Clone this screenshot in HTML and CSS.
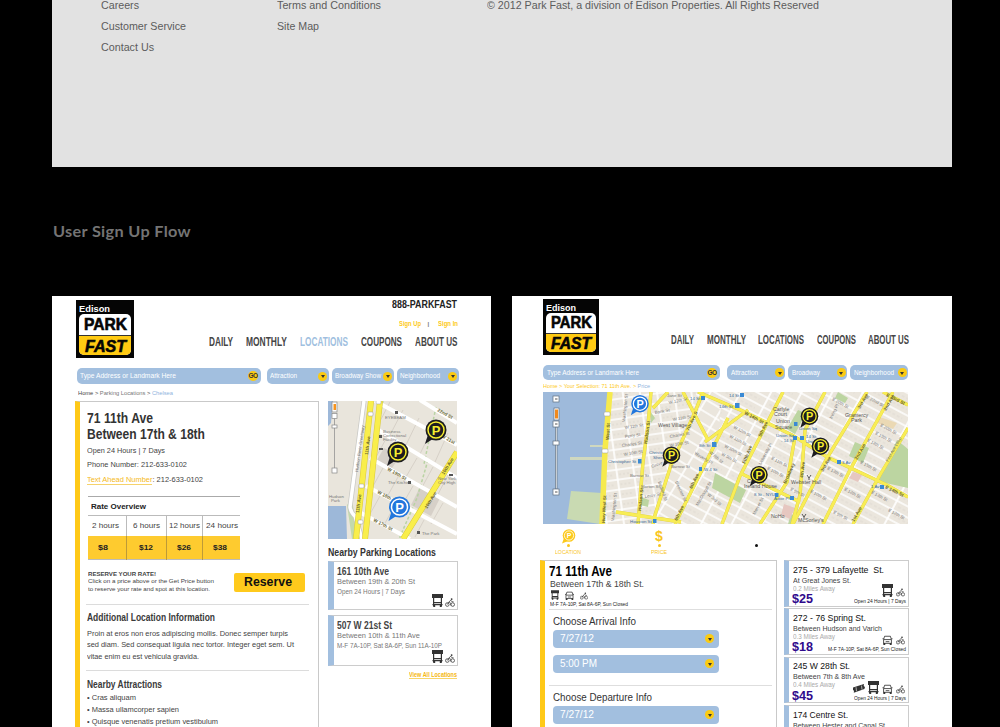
FILE: index.html
```html
<!DOCTYPE html>
<html lang="en">
<head>
<meta charset="utf-8">
<title>Park Fast – User Sign Up Flow</title>
<link rel="stylesheet" href="styles.css">
</head>
<body>
<svg class="defs" width="0" height="0">
  <defs>
    <symbol id="bus" viewBox="0 0 11 13"><path d="M0 0h11v4H0zM1 4h1.2v8H1zM8.8 4H10v8H8.8zM2 8h7v1.2H2zM0.5 10h10v1.2H.5zM1.2 11h2v2h-2zM7.8 11h2v2h-2z"/></symbol>
    <symbol id="car" viewBox="0 0 12 12"><path d="M2.500 1.500h7l1.200 4v4.500H1.300V5.500z M1.500 5.500h9 M3.800 8h4.400 M0 4.500h1.500 M10.500 4.500H12" fill="none" stroke="currentColor" stroke-width="1"/><path d="M1 9.500h2.300V12H1zM8.700 9.500H11V12H8.700z"/></symbol>
    <symbol id="bike" viewBox="0 0 12 11"><g fill="none" stroke="currentColor" stroke-width=".9"><circle cx="2.700" cy="8" r="2.200"/><circle cx="9.300" cy="8" r="2.200"/><path d="M2.700 8l2-3.200 2.200 1.600V9M4.700 4.800L7 2.700l1.300 1.900h2"/></g><circle cx="8" cy="1.300" r="1.100"/></symbol>
    <symbol id="ticket" viewBox="0 0 12 9"><path d="M0 3.500L11 0l-.3 2 1.300 1-.6 2L.8 8.700l.2-2L0 6z"/><path d="M3 3.200l.5 4M8.500 1.600l.5 4" stroke="#fff" stroke-width=".6"/></symbol>
    <symbol id="pin" viewBox="-12 -12 24 26"><path d="M-11 14L-7.500 3 0 7z"/><circle r="10.500"/><circle class="ring" r="8" fill="none" stroke-width="1.500"/><text class="ring-p" y="4.600" text-anchor="middle">P</text></symbol>
    <pattern id="east" width="27" height="10" patternUnits="userSpaceOnUse" patternTransform="rotate(28)"><path d="M0 1h27M1 0v10" stroke="#fff" stroke-width="1.700"/><path d="M5 6h16" stroke="#d8d3cb" stroke-width=".6" stroke-dasharray="3 2"/></pattern>
    <pattern id="west" width="17" height="10" patternUnits="userSpaceOnUse" patternTransform="rotate(-8)"><path d="M0 1h17M1 0v10" stroke="#fff" stroke-width="1.600"/><path d="M3 6h10" stroke="#d3cec6" stroke-width=".6" stroke-dasharray="2 2"/></pattern>
    <pattern id="mid" width="18" height="11" patternUnits="userSpaceOnUse" patternTransform="rotate(31)"><path d="M0 1h18M1 0v11" stroke="#fff" stroke-width="1.600"/></pattern>
  </defs>
</svg>

<footer class="site-footer">
  <div class="links"><p><span data-w="38">Careers</span></p><p><span data-w="85">Customer Service</span></p><p><span data-w="53">Contact Us</span></p></div>
  <div class="links terms"><p><span data-w="104">Terms and Conditions</span></p><p><span data-w="42">Site Map</span></p></div>
  <div class="links"><p><span data-w="332">© 2012 Park Fast, a division of Edison Properties. All Rights Reserved</span></p></div>
</footer>
<h2 class="flow-title"><span data-w="138">User Sign Up Flow</span></h2>

<main class="screens">
<section class="screen location">
  <header class="head">
    <div class="logo"><b><span data-w="31">Edison</span></b><div class="plate"><i class="park"><span data-w="43">PARK</span></i><i class="fast"><span data-w="41">FAST</span></i></div></div>
    <div class="head-right">
      <p class="phone"><span data-w="65">888-PARKFAST</span></p>
      <p class="sign"><span data-w="22">Sign Up</span><em>|</em><span data-w="20">Sign In</span></p>
      <nav><span data-w="24">DAILY</span><span data-w="41">MONTHLY</span><span class="on" data-w="48">LOCATIONS</span><span data-w="41">COUPONS</span><span data-w="42.5">ABOUT US</span></nav>
    </div>
  </header>
  <div class="search">
    <div class="field"><span data-w="96">Type Address or Landmark Here</span><b class="go">GO</b></div>
    <div class="drop"><span data-w="27">Attraction</span><b class="arrow"></b></div>
    <div class="drop"><span data-w="46">Broadway Show</span><b class="arrow"></b></div>
    <div class="drop"><span data-w="40">Neighborhood</span><b class="arrow"></b></div>
  </div>
  <p class="crumbs"><span data-w="95">Home &gt; <u>Parking Locations</u> &gt; <a>Chelsea</a></span></p>
  <div class="cols">
    <article class="detail">
      <h1><span data-w="66">71 11th Ave</span></h1>
      <h1><span data-w="118">Between 17th &amp; 18th</span></h1>
      <p class="fact first"><span data-w="78">Open 24 Hours | 7 Days</span></p>
      <p class="fact"><span data-w="100">Phone Number: 212-633-0102</span></p>
      <p class="fact"><span data-w="116"><a>Text Ahead Number</a>: 212-633-0102</span></p>
      <div class="rates">
        <div class="rate-title"><span data-w="55">Rate Overview</span></div>
        <div class="rate-row"><div><span data-w="27">2 hours</span></div><div><span data-w="27">6 hours</span></div><div><span data-w="31">12 hours</span></div><div><span data-w="32">24 hours</span></div></div>
        <div class="rate-row prices"><div><span data-w="10">$8</span></div><div><span data-w="14">$12</span></div><div><span data-w="14">$26</span></div><div><span data-w="14">$38</span></div></div>
      </div>
      <div class="reserve">
        <div><p class="caps"><span data-w="68">RESERVE YOUR RATE!</span></p><p><span data-w="126">Click on a price above or the Get Price button</span></p><p><span data-w="122">to reserve your rate and spot at this location.</span></p></div>
        <button><span data-w="48">Reserve</span></button>
      </div>
      <h3><span data-w="128">Additional Location Information</span></h3>
      <div class="copy"><p><span data-w="201">Proin at eros non eros adipiscing mollis. Donec semper turpis</span></p><p><span data-w="207">sed diam. Sed consequat ligula nec tortor. Integer eget sem. Ut</span></p><p><span data-w="112">vitae enim eu est vehicula gravida.</span></p></div>
      <h3 class="ruled"><span data-w="75">Nearby Attractions</span></h3>
      <div class="bullets"><p><span data-w="49">• Cras aliquam</span></p><p><span data-w="92">• Massa ullamcorper sapien</span></p><p><span data-w="131">• Quisque venenatis pretium vestibulum</span></p></div>
    </article>
    <aside class="nearby">
      <svg class="map" width="129" height="138" viewBox="328 401 129 138">
        <path fill="#e9e5dc" d="M328 401h129v138H328z"/>
        <path fill="#9db8d9" d="M328 401h5l-2 22-3 3zM328 506h18l1 33h-19z"/>
        <path fill="#c3d9ad" d="M347 505l5-6 6 40h-6z"/>
        <path fill="#d6d0c8" d="M384 448l16 8-8 12-15-8zM420 487l20 11-9 18-20-11z"/>
        <g stroke="#d7d1c8" fill="none" stroke-width="1"><path d="M390 402l-13 25M403 410l-13 25M419 418l-13 27M434 425l-14 29M448 433l-13 29M387 437l-12 22M402 448l-13 24M417 458l-14 24M433 467l-13 24M448 475l-13 25M383 468l-11 20M398 477l-11 20M413 486l-12 21M443 503l-12 21M380 496l-10 18M395 505l-11 20M424 520l-9 17"/></g>
        <path d="M383 401l-10 52M436 407l-12 57M428 460l-11 38-18 41" stroke="#b9d3a3" stroke-width="1.500" fill="none" stroke-dasharray="3 2"/>
        <g fill="none" stroke="#fff" stroke-width="4"><path d="M375 401l82 44M375 428l82 50M370 458l87 49M366 486l91 48M361 513l49 26M420 400l37 23"/></g>
        <path d="M364 401l-14 106q1 6 5 9l7 23" fill="none" stroke="#c9c9c5" stroke-width="5"/><path d="M364 401l-14 106q1 6 5 9l7 23" fill="none" stroke="#fff" stroke-width="3.500"/>
        <g fill="none" stroke="#d9c938" stroke-width="6"><path d="M371 401l-15 138M380 401l-15 138M457 452l-54 87"/></g>
        <g fill="none" stroke="#f9ee4b" stroke-width="5"><path d="M371 401l-15 138M380 401l-15 138M457 452l-54 87"/></g>
        <g class="ml"><text transform="translate(368 455) rotate(-83)">11th Ave</text><text transform="translate(359 513) rotate(-83)">11th Ave</text><text transform="translate(358 472) rotate(-82)" class="thin">Hudson River Greenway</text><text transform="translate(427 509) rotate(-58)">10th Ave</text><text transform="translate(444 475) rotate(-58)">10th Ave</text><text transform="translate(387 470) rotate(29)">W 19th St</text><text transform="translate(377 493) rotate(28)">W 18th St</text><text transform="translate(373 521) rotate(28)">W 17th St</text><text transform="translate(437 411) rotate(29)">22nd St</text><text transform="translate(441 437) rotate(29)">W 21st</text>
        <text class="thin" x="385" y="419">EYEBEAM</text><text class="thin" x="383" y="433">Business</text><text class="thin" x="383" y="437">Correctional</text><text class="thin" x="383" y="441">Facility</text><text class="thin" x="388" y="484">The Kitchen</text><text class="thin" x="422" y="535">The Park</text><text class="thin" x="438" y="480">New York</text><text class="thin" x="438" y="484">City High</text><text class="thin" x="329" y="498">Hudson</text><text class="thin" x="331" y="502">Park</text></g>
        <g fill="#fff" stroke="#999" stroke-width=".5"><rect x="376" y="400" width="5" height="4" rx="1"/><rect x="368" y="412" width="5" height="4" rx="1"/><rect x="359" y="484" width="5" height="4" rx="1"/><rect x="358" y="520" width="5" height="4" rx="1"/></g>
        <g fill="#555"><path d="M395 411h3v3h-3zM379 435h3v3h-3zM379 448h4v2h-4zM408 481h3v3h-3zM449 474h4v2h-4zM417 531h3v3h-3z"/></g>
        <g fill="#fff" stroke="#888" stroke-width=".7"><rect x="332" y="402" width="5" height="10"/><path d="M334.500 418v52"/><rect x="332" y="413.500" width="5" height="5"/><rect x="332" y="425" width="5" height="3"/><rect x="332" y="468" width="5" height="5"/></g><path d="M333.500 404h2.500v6h-2.500z" fill="#f7941d"/>
        <use href="#pin" class="pin" x="424" y="418" width="24" height="26"/><use href="#pin" class="pin" x="386" y="440" width="24" height="26"/><use href="#pin" class="pin blue" x="387.500" y="495" width="24" height="26"/>
      </svg>
      <h3><span data-w="108">Nearby Parking Locations</span></h3>
      <div class="spot"><h4><span data-w="52">161 10th Ave</span></h4><p><span data-w="78">Between 19th &amp; 20th St</span></p><p class="hrs"><span data-w="68">Open 24 Hours | 7 Days</span></p><div class="icons"><svg width="11" height="13"><use href="#bus"/></svg><svg width="10" height="9"><use href="#bike"/></svg></div></div>
      <div class="spot tall"><h4><span data-w="55">507 W 21st St</span></h4><p><span data-w="83">Between 10th &amp; 11th Ave</span></p><p class="hrs"><span data-w="105">M-F 7A-10P, Sat 8A-6P, Sun 11A-10P</span></p><div class="icons"><svg width="11" height="13"><use href="#bus"/></svg><svg width="10" height="9"><use href="#bike"/></svg></div></div>
      <p class="all"><a><span data-w="48">View All Locations</span></a></p>
    </aside>
  </div>
</section>

<section class="screen price">
  <header class="head">
    <div class="logo"><b><span data-w="30">Edison</span></b><div class="plate"><i class="park"><span data-w="41">PARK</span></i><i class="fast"><span data-w="40">FAST</span></i></div></div>
    <div class="head-right"><nav><span data-w="23">DAILY</span><span data-w="39">MONTHLY</span><span data-w="46">LOCATIONS</span><span data-w="39">COUPONS</span><span data-w="41">ABOUT US</span></nav></div>
  </header>
  <div class="search">
    <div class="field"><span data-w="92">Type Address or Landmark Here</span><b class="go">GO</b></div>
    <div class="drop"><span data-w="27">Attraction</span><b class="arrow"></b></div>
    <div class="drop"><span data-w="28">Broadway</span><b class="arrow"></b></div>
    <div class="drop"><span data-w="40">Neighborhood</span><b class="arrow"></b></div>
  </div>
  <p class="crumbs"><span data-w="107">Home &gt; Your Selection: 71 11th Ave. &gt; <a>Price</a></span></p>
  <svg class="map wide" width="365" height="132" viewBox="543 392 365 132">
    <path fill="#ebe6dd" d="M543 392h365v132H543z"/>
    <path fill="url(#west)" d="M604 392h93l-25 68-20 64h-52z"/>
    <path fill="url(#mid)" d="M697 392h25l-5 60-40 72h-25l20-64z"/>
    <path fill="url(#east)" d="M722 392h186v132H677l40-72z"/>
    <path fill="#9ebadb" d="M543 392h65l-2 50-5 82h-58z"/>
    <path fill="#c9dab2" d="M571 491l31 2-2 31-33-5z"/><path fill="#cfd8bf" d="M590 445h16v2h-16zM570 457h35v3h-35z"/>
    <path fill="#bcd5a1" d="M798 410l8 3-11 21-8-5zM855 442l14 6-6 15-14-7zM897 440l11 9v39l-31-7zM715 473l31 17-6 13-28-15zM838 392l10 6-3 5-10-5zM641 497l8 3-1 7-8-2zM650 411l5 7-4 5zM791 514l7 3-4 7h-6z"/>
    <path fill="#e6c7c0" d="M853 472l9 3-4 7-9-4zM784 504l11 4-5 11-9-4z"/><path fill="#ebd9b4" d="M880 417l17 6-4 6-16-6z"/>
    <g fill="none" stroke="#dccb45" stroke-width="3.400"><path id="av" d="M651 392l-3 33-5 37-5 62M653 408l15-16M703 392l-8 20-24 53-16 50-2 9M683 392l25 48M728 418l-53 106M698 392l47 20 47 23 35 22 60 28 21 12M783 392l-43 84-18 48M795 437l-8 45-27 42M825 392l-20 38-5 65-8 29M867 392l-40 66-34 66M893 392l-43 78-27 54M908 428l-28 47-27 49M883 392l25 13M740 473l60 29M616 512l65 10M748 410l-43 32"/></g>
    <use href="#av" fill="none" stroke="#f8ed55" stroke-width="2.800"/>
    <path d="M610 392l-5 58-3 74" fill="none" stroke="#f6ea4d" stroke-width="5.500"/>
    <g class="ml"><text transform="translate(609 440) rotate(-86)">West St</text><text transform="translate(605 523) rotate(-87)">Hwy  West St</text><text transform="translate(647 444) rotate(-82)">Hudson St</text><text transform="translate(641 511) rotate(-84)">Hudson St</text><text transform="translate(689 431) rotate(-65)">7th Ave S</text><text transform="translate(692 489) rotate(-64)">6th Ave</text><text transform="translate(677 521) rotate(-64)">6th Ave</text><text transform="translate(744 414) rotate(28)">W 14th St</text><text transform="translate(761 437) rotate(-64)">5th Ave</text><text transform="translate(745 464) rotate(-68)">Fifth Ave</text><text transform="translate(786 484) rotate(-66)">Broadway</text><text transform="translate(803 478) rotate(-83)">4th Ave</text><text transform="translate(823 472) rotate(-60)">3rd Ave</text><text transform="translate(857 460) rotate(-60)">2nd Ave</text><text transform="translate(860 409) rotate(-60)">3rd Ave</text><text transform="translate(886 411) rotate(-60)">2nd Ave</text><text transform="translate(854 522) rotate(-60)">1st Ave</text><text transform="translate(886 396) rotate(27)">E 23rd St</text><text transform="translate(885 488) rotate(27)">E 14th St</text>
    <g class="thin"><text transform="translate(733 428) rotate(28)">W 12th St</text><text transform="translate(729 437) rotate(28)">W 11th St</text><text transform="translate(724 447) rotate(28)">W 10th St</text><text transform="translate(721 455) rotate(28)">W 9th St</text><text transform="translate(771 459) rotate(28)">E 11th St</text><text transform="translate(767 469) rotate(28)">E 10th St</text><text transform="translate(790 490) rotate(28)">E 9th St</text><text transform="translate(810 492) rotate(28)">E 10th St</text><text transform="translate(827 469) rotate(28)">E 13th St</text><text transform="translate(844 490) rotate(28)">E 12th St</text><text transform="translate(860 463) rotate(28)">E 15th St</text><text transform="translate(867 441) rotate(28)">E 18th St</text><text transform="translate(875 434) rotate(28)">E 19th St</text><text transform="translate(880 426) rotate(28)">E 20th St</text><text transform="translate(832 400) rotate(28)">E 20th St</text><text transform="translate(866 398) rotate(28)">E 22nd St</text><text transform="translate(833 513) rotate(28)">E 9th St</text><text transform="translate(871 493) rotate(28)">E 13th St</text><text transform="translate(888 511) rotate(28)">E 12th St</text>
    <text transform="translate(625 429) rotate(-8)">W 11th St</text><text transform="translate(625 438) rotate(-8)">Perry St</text><text transform="translate(622 447) rotate(-8)">Charles St</text><text transform="translate(624 456) rotate(-10)">W 10th St</text><text transform="translate(669 404) rotate(-12)">W 12th St</text><text transform="translate(655 414) rotate(-10)">Bank St</text><text transform="translate(673 421) rotate(-10)">W 11th St</text><text transform="translate(670 438) rotate(-10)">Charles St</text><text transform="translate(670 447) rotate(-10)">W 10th St</text><text transform="translate(630 477)">Barrow St</text><text transform="translate(641 488)">Morton St</text><text transform="translate(645 498) rotate(-10)">Leroy St</text><text transform="translate(671 468)">Barrow St</text><text transform="translate(652 468) rotate(-20)">Grove</text><text transform="translate(658 482) rotate(70)">Bedford St</text><text transform="translate(675 482) rotate(65)">Bleecker St</text><text transform="translate(694 454) rotate(31)">Waverly Pl</text><text transform="translate(709 453) rotate(40)">W 8th St</text><text transform="translate(707 495) rotate(40)">W 3rd St</text><text transform="translate(698 506) rotate(-60)">MacDougal St</text><text transform="translate(614 521) rotate(-84)">Washington St</text><text transform="translate(625 422) rotate(-84)">Washington St</text><text transform="translate(755 515) rotate(-62)">Mercer St</text><text transform="translate(761 465) rotate(-62)">University Pl</text><text transform="translate(832 419) rotate(-65)">Irving Pl</text><text transform="translate(888 462) rotate(-60)">First Ave Loop</text><text x="667" y="397">Jane St</text></g>
    <g class="place"><text x="658" y="427">West Village</text><text x="773" y="411">Carlyle</text><text x="774" y="416">Court</text><text x="776" y="423">Union</text><text x="775" y="429">Square</text><text x="845" y="417">Gramercy</text><text x="851" y="422">Park</text><text x="771" y="518">NoHo</text><text x="791" y="484">Webster Hall</text><text x="747" y="483">Cooper</text><text x="744" y="488">Ireland House</text><text x="798" y="522">McSorley's</text></g>
    <g class="blue-l"><text x="608" y="463">Christopher St</text><text x="649" y="454">Christopher St</text><text x="653" y="459">Sheridan</text><text x="690" y="400">14 St</text><text x="699" y="447">8th St</text><text x="704" y="471">W 4 St</text><text x="729" y="397">14 St</text><text x="719" y="408">14th St</text><text x="799" y="430">Union Sq</text><text x="776" y="437">Union Sq</text><text x="781" y="442">- 14 St</text><text x="806" y="438">14 St</text><text x="806" y="443">Union</text><text x="842" y="464">3 Av</text><text x="871" y="488">1 Av</text><text x="754" y="496">8 St - NYU</text><text x="774" y="500">Astor Pl</text><text x="630" y="523">Houston St</text></g></g>
    <g fill="#3a8ad4"><path d="M638 459h3.500v4.500H638zM712 442h4.500v5H712zM701 396h4v4h-4zM699 467h3v4h-3zM735 403h4.500v5H735zM740 393h4v4h-4zM794 422h3.500v4H794zM793 436h4v4h-4zM800 436h4v4h-4zM837 460h4v4h-4zM880 485h4v4h-4zM775 493h3.500v4H775zM790 496h4v4h-4zM653 519h3.500v4H653z"/></g>
    <g fill="#fff" stroke="#999" stroke-width=".5"><rect x="604" y="412" width="6" height="4" rx="1"/><rect x="602" y="449" width="6" height="4" rx="1"/></g>
    <path d="M807 475l2 3 2-3M809 478v2M802 514l2 3 2-3M804 517v2" stroke="#333" fill="none" stroke-width=".8"/>
    <g fill="#fff" stroke="#607080" stroke-width=".7"><rect x="553" y="396" width="6" height="6"/><rect x="554" y="408" width="5" height="12"/><path d="M555.500 427h1.500v62h-1.500z"/><rect x="553" y="421" width="6" height="6"/><rect x="553" y="441" width="6" height="4"/><rect x="553" y="489" width="6" height="6"/></g><path d="M555 409.500h3v9h-3z" fill="#f0891e"/><path d="M555 399h2.500M555 424h2.500M555 492h2.500" stroke="#555"/>
    <use href="#pin" class="pin blue" x="630" y="393.500" width="20" height="22"/><use href="#pin" class="pin" x="661.500" y="445" width="20" height="22"/><use href="#pin" class="pin" x="799.500" y="406" width="20" height="22"/><use href="#pin" class="pin" x="810.500" y="436" width="20" height="22"/><use href="#pin" class="pin" x="749" y="464.500" width="20" height="22"/>
  </svg>
  <div class="steps">
    <div><svg class="step-icon" width="15" height="15" viewBox="0 0 15 15"><path d="M1 14.500l2-5.500 4 3z"/><circle cx="8" cy="6.500" r="6.300"/><circle cx="8" cy="6.500" r="4.600" fill="none" stroke="#fff" stroke-width=".8"/><text x="8.200" y="9.200" text-anchor="middle" fill="#fff">P</text></svg><i></i><span data-w="26">LOCATION</span></div>
    <div><strong>$</strong><i></i><span data-w="16">PRICE</span></div>
    <div class="next"><i></i></div>
  </div>
  <div class="cols">
    <article class="booking">
      <h1><span data-w="63">71 11th Ave</span></h1>
      <p class="between"><span data-w="94">Between 17th &amp; 18th St.</span></p>
      <div class="icons"><svg width="8" height="10"><use href="#bus"/></svg><svg width="9" height="9"><use href="#car"/></svg><svg width="8" height="8"><use href="#bike"/></svg></div>
      <p class="tiny"><span data-w="78">M-F 7A-10P, Sat 8A-6P, Sun Closed</span></p>
      <div class="choose"><h5><span data-w="83">Choose Arrival Info</span></h5><div class="select"><span data-w="34">7/27/12</span><b class="arrow"></b></div><div class="select"><span data-w="37">5:00 PM</span><b class="arrow"></b></div></div>
      <div class="choose"><h5><span data-w="99">Choose Departure Info</span></h5><div class="select"><span data-w="34">7/27/12</span><b class="arrow"></b></div></div>
    </article>
    <aside class="list">
      <div class="item"><h4><span data-w="91">275 - 379 Lafayette &nbsp;St.</span></h4><p><span data-w="58">At Great Jones St.</span></p><p class="miles"><span data-w="42">0.2 Miles Away</span></p><div class="foot"><strong><span data-w="21">$25</span></strong><div class="meta"><div class="icons"><svg width="11" height="13"><use href="#bus"/></svg><svg width="9" height="9"><use href="#bike"/></svg></div><small><span data-w="52">Open 24 Hours | 7 Days</span></small></div></div></div>
      <div class="item"><h4><span data-w="73">272 - 76 Spring St.</span></h4><p><span data-w="89">Between Hudson and Varich</span></p><p class="miles"><span data-w="42">0.3 Miles Away</span></p><div class="foot"><strong><span data-w="21">$18</span></strong><div class="meta"><div class="icons"><svg width="11" height="10"><use href="#car"/></svg><svg width="9" height="9"><use href="#bike"/></svg></div><small><span data-w="78">M-F 7A-10P, Sat 8A-6P, Sun Closed</span></small></div></div></div>
      <div class="item"><h4><span data-w="57">245 W 28th St.</span></h4><p><span data-w="72">Between 7th &amp; 8th Ave</span></p><p class="miles"><span data-w="42">0.4 Miles Away</span></p><div class="foot"><strong><span data-w="21">$45</span></strong><div class="meta"><div class="icons"><svg width="12" height="11"><use href="#ticket"/></svg><svg width="11" height="13"><use href="#bus"/></svg><svg width="11" height="10"><use href="#car"/></svg><svg width="9" height="9"><use href="#bike"/></svg></div><small><span data-w="52">Open 24 Hours | 7 Days</span></small></div></div></div>
      <div class="item"><h4><span data-w="55">174 Centre St.</span></h4><p><span data-w="94">Between Hester and Canal St.</span></p></div>
    </aside>
  </div>
</section>
</main>
<script src="fit.js"></script>
</body>
</html>
```

FILE: styles.css
```css
* { box-sizing: border-box; }
body { margin: 0; padding: 0 48px 0 52px; height: 727px; overflow: hidden; background: #000; font-family: "Liberation Sans", Arial, sans-serif; color: #444; }
p, h1, h2, h3, h4, h5 { margin: 0; font-weight: 400; }
.defs { display: block; height: 0; }
[data-w] { display: inline-block; white-space: nowrap; transform-origin: 0 50%; }
svg { display: block; }

.site-footer { display: flex; height: 167px; padding-left: 49px; background: #e2e2e2; font-size: 11px; color: #5c5c5c; }
.links { margin-top: -5px; width: 176px; line-height: 21px; }
.links.terms { width: 210px; }
.flow-title { height: 129px; padding: 54px 0 0 1px; font: 700 15px/21px Lato, sans-serif; letter-spacing: .3px; color: #747474; }

.screens { display: flex; gap: 21px; }
.screen { width: 439px; height: 431px; overflow: hidden; background: #fff; padding-left: 23px; }
.screen.price { width: 440px; padding-left: 28px; }

/* header */
.head { display: flex; justify-content: space-between; width: 382.500px; height: 72px; padding: 4px 0 0 1px; }
.price .head { width: 369px; height: 69px; padding: 3px 0 0 3px; }
.logo { width: 58px; height: 58px; padding: 4px 3px 3px; background: #050505; display: flex; flex-direction: column; }
.price .logo { width: 56px; height: 56px; }
.logo b { height: 10px; color: #fff; font: 900 9.500px/10px "Liberation Sans", sans-serif; }
.plate { flex: 1; border-radius: 5px; overflow: hidden; display: grid; grid-template-rows: 1fr 1fr; background: #fff; color: #050505; -webkit-text-stroke: .6px #050505; text-align: center; }
.plate i { font: 700 16.500px/21px "Liberation Sans", sans-serif; }
.plate .fast { background: #ffca12; border-top: 1px solid #333; font-style: italic; line-height: 20px; }
.price .plate i { font-size: 16px; line-height: 20px; }
.price .plate .fast { line-height: 19px; }
.head-right { margin-top: -4px; }
.price .head-right { margin-top: 34.500px; }
.phone { height: 15px; padding-right: 1px; text-align: right; font: 700 11.500px/16px "Liberation Sans"; color: #222; }
.sign { height: 25px; display: flex; justify-content: flex-end; gap: 7px; font: 700 7.500px/26px "Liberation Sans"; color: #fdc918; }
.sign em { width: 3px; font-style: normal; font-size: 6px; color: #777; }
nav { display: flex; gap: 13px; font: 700 12.500px/12px "Liberation Sans"; color: #454545; }
.price nav { gap: 12.500px; font-size: 12px; }
nav .on { color: #9fbfe0; }

/* search bar */
.search { display: flex; gap: 3px; padding-left: 2px; height: 16px; font-size: 6.500px; line-height: 16px; color: #fff; }
.price .search { padding-left: 3px; height: 15px; line-height: 15px; }
.field, .drop, .select { display: flex; justify-content: space-between; align-items: center; background: #a2bfdf; border-radius: 5px; padding: 0 2px 0 3px; }
.field { width: 184px; margin-right: 3px; }
.drop { width: 62px; }
.price .field { width: 177px; margin-right: 4px; padding-left: 4px; }
.price .drop { width: 58.300px; padding-left: 4px; padding-right: 1px; }
.go, .arrow { width: 9px; height: 9px; border-radius: 50%; background: #fbcb12; color: #333; display: flex; align-items: center; justify-content: center; font: 700 6.500px/10px "Liberation Sans"; letter-spacing: -.5px; flex: none; }
.go { width: 10px; height: 10px; margin-right: 1px; }
.arrow::after { content: ""; border: 2.500px solid transparent; border-top: 3px solid #333; border-bottom: 0; margin-top: 1px; }
.crumbs { height: 17px; padding-left: 3px; font-size: 6px; line-height: 18px; color: #444; }
.crumbs u { text-decoration: none; color: #777; }
.crumbs a { color: #8fb4dd; }
.price .crumbs { height: 12px; line-height: 12px; color: #fdc91c; }
.cols { display: flex; }

/* location detail */
.detail { width: 244px; height: 340px; margin-top: -.5px; padding: 8px 8px 0 7px; border: 1.500px solid #c9c9c9; border-left: 5px solid #ffc918; border-bottom: 0; }
.detail h1 { height: 16px; font: 700 14px/17px "Liberation Sans"; color: #333; }
.fact { height: 15px; font-size: 7.800px; line-height: 15px; color: #444; }
.fact.first { margin-top: 1.500px; height: 14px; }
.fact a { color: #f5b921; border-bottom: 1px solid #f5d26b; }
.rates { width: 152px; margin: 9px 0 0 1px; border-top: 1px solid #aaa; border-bottom: 1px solid #bbb; }
.rate-title { height: 18px; padding-left: 3px; font: 700 7.800px/19px "Liberation Sans"; color: #222; }
.rate-row { display: grid; grid-template-columns: 38px 39.500px 36.500px 38px; height: 21px; border-top: 1px solid #bbb; font-size: 8px; line-height: 20px; text-align: center; }
.rate-row div + div { border-left: 1px solid #bbb; }
.rate-row div:first-child { padding-right: 4px; }
.rate-row.prices { height: 23px; border-top: 0; background: #fecb2f; color: #222; font-weight: 700; line-height: 24px; }
.rate-row.prices div:first-child { padding-right: 8px; }
.rate-row.prices div + div { border-color: #bd9a38; }
.rate-row.prices div:last-child { padding-right: 4px; }
.reserve { display: flex; justify-content: space-between; height: 44.500px; width: 223px; margin-left: -1px; padding: 10.500px 4px 0 1.500px; border-bottom: 1px solid #dcdcdc; font-size: 6px; line-height: 7.500px; color: #444; }
.reserve p { height: 7.500px; }
.reserve .caps { font-weight: 700; font-size: 5.800px; }
.reserve button { width: 71px; height: 19px; margin-top: 2.500px; padding: 0 3px 0 0; border: 0; border-radius: 2px; background: #ffca1c; color: #111; font: 700 12.500px/19px "Liberation Sans"; }
.detail h3 { margin-top: 5px; height: 16px; font: 700 10px/16px "Liberation Sans"; color: #3a3a3a; }
.copy { padding-top: 2px; font-size: 7.500px; line-height: 11.500px; }
.copy p { height: 11.500px; }
.detail h3.ruled { width: 223px; height: 23px; margin: 8px 0 0 -1px; padding: 6px 0 0 1px; border-top: 1px solid #dcdcdc; }
.bullets { margin-top: -1px; font-size: 7.500px; line-height: 12.200px; }
.bullets p { height: 12.200px; }

/* nearby column */
.nearby { width: 130px; margin-left: 9px; }
.nearby h3 { height: 22px; font: 700 10.500px/26px "Liberation Sans"; color: #333; }
.spot { height: 49px; margin-bottom: 5px; padding: 1px 0 0 3px; border: 1.500px solid #ccc; border-left: 6px solid #a2bfdf; position: relative; }
.spot h4 { height: 13px; padding-top: 1px; font: 700 10.500px/14px "Liberation Sans"; color: #444; }
.spot p { height: 9px; font-size: 7.300px; line-height: 11px; color: #777; }
.spot .hrs { height: 12px; font-size: 6.500px; line-height: 14px; }
.spot.tall { height: 51px; }
.icons { display: flex; align-items: flex-end; color: #333; fill: #333; }
.spot .icons { position: absolute; right: 2px; bottom: 2px; gap: 2px; }
.all { padding-right: 1px; text-align: right; font: 700 6.500px/8px "Liberation Sans"; color: #f5b70e; }
.all a { border-bottom: 1px solid #f8d568; }

/* maps */
.pin { fill: #1c1c20; --ring: #f6ee2e; }
.pin.blue { fill: #2277dd; --ring: #fff; }
.ring { stroke: var(--ring); }
.ring-p { fill: var(--ring); font: 700 13px "Liberation Sans"; }
.ml { font: 700 4.600px "Liberation Sans"; fill: #69652f; }
.ml .thin { font-weight: 400; font-size: 4.300px; fill: #777; }
.ml .place { font-weight: 400; font-size: 5.300px; fill: #555; }
.ml .blue-l { font-weight: 400; font-size: 4.400px; fill: #3a6c9a; }
.map.wide { margin-left: 3px; }

/* steps */
.steps { display: flex; height: 36px; padding-left: 13px; font-size: 5px; line-height: 7px; color: #f9c51d; }
.steps div { width: 30px; padding-top: 5px; display: flex; flex-direction: column; align-items: center; }
.steps div + div { margin-left: 61px; }
.steps .next { margin-left: 67px; padding-top: 20px; }
.steps i { width: 3px; height: 3px; border-radius: 50%; background: #f9c51d; margin-bottom: 2px; }
.steps .next i { background: #111; }
.steps strong { height: 15px; font: 700 14px/14px "Liberation Sans"; }
.step-icon { fill: #fcc91c; }
.step-icon text { font: 700 7px "Liberation Sans"; }

/* booking */
.booking { width: 237px; height: 180px; padding: 3px 4px 0 4px; border: 1.500px solid #c9c9c9; border-left: 5px solid #ffc918; }
.booking h1 { height: 15px; font: 700 14px/15px "Liberation Sans"; color: #000; }
.between { height: 10px; padding-left: 1px; font-size: 8.500px; line-height: 10px; }
.booking .icons { height: 11px; gap: 6px; padding-left: 2px; }
.tiny { height: 8.500px; padding-left: 1px; font-size: 5px; line-height: 8px; color: #222; }
.choose { height: 76px; padding: 3px 0 0 4px; border-top: 1px solid #dedede; }
.choose h5 { height: 17px; font-size: 10px; line-height: 17px; color: #333; }
.select { width: 166px; height: 18.500px; margin-bottom: 6.500px; padding: 0 5px 0 6.500px; border-radius: 4px; font-size: 10px; color: #fff; }

.list { width: 124.500px; margin-left: 7px; }
.item { height: 46.500px; margin-bottom: 1.900px; padding: 3.500px 2px 0 3px; border: 1px solid #ccc; border-left: 5px solid #a2bfdf; }
.item h4 { height: 11px; padding-left: 1px; font-size: 8.500px; line-height: 11px; color: #111; }
.item p { height: 9px; padding-left: 1px; font-size: 7px; line-height: 9px; color: #444; }
.item .miles { font-size: 6.500px; line-height: 8px; color: #aaa; height: 7.500px; }
.foot { display: flex; justify-content: space-between; height: 13px; }
.foot strong { font: 700 13px/14px "Liberation Sans"; color: #2f0a8c; }
.meta { display: flex; flex-direction: column; align-items: flex-end; margin-top: -8px; }
.meta .icons { height: 13px; gap: 3px; padding-right: 1px; }
.meta small { height: 8px; padding-top: 1px; font-size: 5px; line-height: 7px; color: #222; }
```

FILE: fit.js
```javascript
document.querySelectorAll('[data-w]').forEach(function (el) {
  var natural = el.getBoundingClientRect().width;
  var target = parseFloat(el.dataset.w);
  el.style.transform = 'scaleX(' + target / natural + ')';
  el.style.marginRight = (target - natural) + 'px';
});
```
